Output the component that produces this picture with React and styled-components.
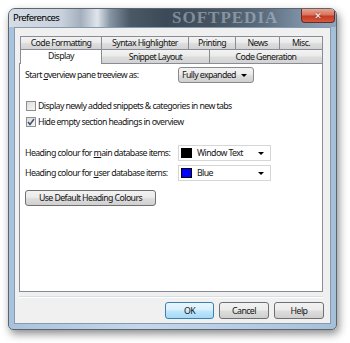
import React from 'react'
import styled, { createGlobalStyle } from 'styled-components'

const Global = createGlobalStyle`
  body {
    margin: 0;
    background: #ffffff;
    font-family: "Noto Sans", "Open Sans", sans-serif;
    font-size: 8.8px;
    letter-spacing: -0.6px;
    color: #151515;
  }
`

const Page = styled.div`
  padding: 8px 13px 13px 8px;
`

const Window = styled.div`
  width: 329px;
  height: 322px;
  box-sizing: border-box;
  border: 1px solid #5d6670;
  border-radius: 7px 7px 5px 5px;
  background: linear-gradient(90deg, #a9c2dc 0%, #c4d7ea 40%, #b7cde4 70%, #a6bfd9 100%);
  box-shadow: 2px 4px 9px rgba(0, 0, 0, 0.45);
  display: flex;
  flex-direction: column;
  padding: 0 5px 5px 5px;
`

const TitleBar = styled.div`
  position: relative;
  height: 18px;
  margin: 0 -5px;
  padding: 0 3px 0 4px;
  display: flex;
  align-items: flex-start;
  justify-content: space-between;
  background: linear-gradient(90deg, #d4dce5 0%, #c9d2dc 16%, #a3afbc 22%, #dfe5ec 27%, #8593a2 31%, #4b5866 37%, #3c4957 48%, #46535f 62%, #5d6d7e 78%, #7f93a8 90%, #8fa5bb 100%);
  border-radius: 6px 6px 0 0;
  overflow: hidden;
`

const Title = styled.span`
  position: relative;
  z-index: 1;
  line-height: 18px;
  font-size: 9.5px;
  color: #000;
`

const Watermark = styled.span`
  position: absolute;
  left: 163px;
  top: 0px;
  font-family: "Liberation Serif", serif;
  font-weight: bold;
  font-size: 17px;
  line-height: 18px;
  letter-spacing: 1px;
  color: rgba(190, 205, 222, 0.5);
`

const Close = styled.div`
  position: relative;
  z-index: 1;
  width: 34px;
  height: 14px;
  box-sizing: border-box;
  margin-right: -2px;
  border: 1px solid #6b2a23;
  border-top: none;
  border-radius: 0 0 4px 4px;
  background: linear-gradient(#e8a390 0%, #d8735d 45%, #c33b22 55%, #d65a3e 100%);
  display: flex;
  align-items: center;
  justify-content: center;
  color: #fff;
  font-family: "DejaVu Sans", sans-serif;
  font-weight: bold;
  font-size: 9px;
  letter-spacing: 0;
  text-shadow: 0 0 2px #5a1a10;
`

const Client = styled.div`
  flex: 1;
  background: #f0f0f0;
  border: 1px solid #8799ad;
  display: flex;
  flex-direction: column;
  padding: 8px 0 0 4px;
`

const TabRow = styled.div`
  display: flex;
  height: ${p => p.h}px;
  margin-left: 1px;
`

const Tab = styled.div`
  width: ${p => p.w}px;
  box-sizing: border-box;
  margin-left: -1px;
  border: 1px solid #898c95;
  border-bottom: none;
  background: linear-gradient(#f3f3f3 0%, #ebebeb 45%, #dddddd 55%, #d2d2d2 100%);
  display: flex;
  align-items: center;
  justify-content: center;
  white-space: nowrap;
  &:first-child { margin-left: 0; }
`

const ActiveTab = styled(Tab)`
  position: relative;
  z-index: 2;
  background: #ffffff;
  height: calc(100% + 1px);
  align-items: flex-start;
`

const Panel = styled.div`
  width: 304px;
  height: 229px;
  box-sizing: border-box;
  border: 1px solid #898c95;
  background: #ffffff;
  padding: 3px 5px 0 5px;
  display: flex;
  flex-direction: column;
`

const Row = styled.div`
  display: flex;
  align-items: center;
  height: 16px;
  margin-top: ${p => p.mt || 0}px;
`

const Label = styled.span`
  width: 153px;
  flex-shrink: 0;
  white-space: nowrap;
`

const DropButton = styled.div`
  width: ${p => p.w}px;
  height: 16px;
  box-sizing: border-box;
  border: 1px solid #8a8a8a;
  border-radius: 3px;
  background: linear-gradient(#f3f3f3 0%, #ebebeb 45%, #dddddd 55%, #cfcfcf 100%);
  display: flex;
  align-items: center;
  padding: 0 6px 0 3px;
  justify-content: space-between;
`

const ColorCombo = styled.div`
  width: ${p => p.w}px;
  height: 16px;
  box-sizing: border-box;
  border: 1px solid #d6d6d6;
  background: #ffffff;
  display: flex;
  align-items: center;
  padding: 0 6px 0 2px;
`

const Swatch = styled.span`
  width: 11px;
  height: 10px;
  background: ${p => p.c};
  border: 1px solid #000;
  box-sizing: border-box;
  margin-right: 5px;
`

const ComboText = styled.span`
  flex: 1;
  white-space: nowrap;
`

const Arrow = styled.span`
  width: 0;
  height: 0;
  border-left: 3px solid transparent;
  border-right: 3px solid transparent;
  border-top: 3px solid #000;
`

const CheckRow = styled.label`
  display: flex;
  align-items: center;
  height: 14px;
  margin-top: ${p => p.mt || 0}px;
  white-space: nowrap;
`

const Box = styled.span`
  width: 10px;
  height: 10px;
  box-sizing: border-box;
  margin: 0 2px 0 1px;
  border: 1px solid #8f8f8f;
  background: linear-gradient(135deg, #dcdcdc, #f6f6f6);
  display: flex;
  align-items: center;
  justify-content: center;
`

const Button = styled.div`
  width: ${p => p.w}px;
  height: ${p => p.h || 17}px;
  box-sizing: border-box;
  border: 1px solid ${p => (p.primary ? '#3c7fb1' : '#707070')};
  border-radius: 3px;
  background: ${p =>
    p.primary
      ? 'linear-gradient(#eaf6fd 0%, #d9f0fc 45%, #bee6fd 55%, #a7d9f5 100%)'
      : 'linear-gradient(#f2f2f2 0%, #ebebeb 45%, #dddddd 55%, #cfcfcf 100%)'};
  display: flex;
  align-items: center;
  justify-content: center;
  white-space: nowrap;
`

const Separator = styled.div`
  width: 304px;
  height: 1px;
  margin-top: 4px;
  background: #d5dfe5;
  border-bottom: 1px solid #ffffff;
`

const ButtonRow = styled.div`
  display: flex;
  justify-content: flex-end;
  gap: 5px;
  width: 305px;
  margin-top: 4px;
`

export default function App() {
  return (
    <Page>
      <Global />
      <Window>
        <TitleBar>
          <Watermark>SOFTPEDIA</Watermark>
          <Title>Preferences</Title>
          <Close>✕</Close>
        </TitleBar>
        <Client>
          <TabRow h={13}>
            <Tab w={82}>Code Formatting</Tab>
            <Tab w={88}>Syntax Highlighter</Tab>
            <Tab w={48}>Printing</Tab>
            <Tab w={45}>News</Tab>
            <Tab w={44}>Misc.</Tab>
          </TabRow>
          <TabRow h={14}>
            <ActiveTab w={82}>Display</ActiveTab>
            <Tab w={109}>Snippet Layout</Tab>
            <Tab w={114}>Code Generation</Tab>
          </TabRow>
          <Panel>
            <Row>
              <Label>Start <u>o</u>verview pane treeview as:</Label>
              <DropButton w={76}>
                <ComboText>Fully expanded</ComboText>
                <Arrow />
              </DropButton>
            </Row>
            <CheckRow mt={16}>
              <Box />
              Display newly added snippets &amp; categories in new tabs
            </CheckRow>
            <CheckRow mt={2}>
              <Box>
                <svg width="8" height="8" viewBox="0 0 8 8">
                  <path d="M1 4 L3 6.5 L7 1" fill="none" stroke="#3a4f74" strokeWidth="1.4" />
                </svg>
              </Box>
              Hide empty section headings in overview
            </CheckRow>
            <Row mt={16}>
              <Label>Heading colour for <u>m</u>ain database items:</Label>
              <ColorCombo w={93}>
                <Swatch c="#000000" />
                <ComboText>Window Text</ComboText>
                <Arrow />
              </ColorCombo>
            </Row>
            <Row mt={4}>
              <Label>Heading colour for <u>u</u>ser database items:</Label>
              <ColorCombo w={93}>
                <Swatch c="#0000ff" />
                <ComboText>Blue</ComboText>
                <Arrow />
              </ColorCombo>
            </Row>
            <Row mt={9}>
              <Button w={131} h={16}>Use Default Heading Colours</Button>
            </Row>
          </Panel>
          <Separator />
          <ButtonRow>
            <Button w={49} primary>OK</Button>
            <Button w={50}>Cancel</Button>
            <Button w={50}>Help</Button>
          </ButtonRow>
        </Client>
      </Window>
    </Page>
  )
}
